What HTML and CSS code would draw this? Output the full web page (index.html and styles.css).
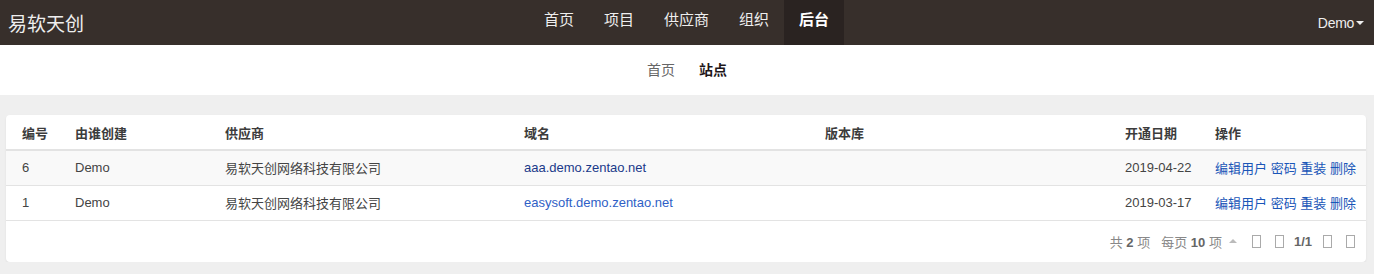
FILE: index.html
```html
<!DOCTYPE html>
<html lang="zh-CN">
<head>
    <meta charset="UTF-8">
    <title>站点</title>
    <link rel="stylesheet" href="styles.css">
</head>
<body>
    <header class="navbar">
        <div class="brand">易软天创</div>
        <ul class="nav">
            <li><a href="#">首页</a></li>
            <li><a href="#">项目</a></li>
            <li><a href="#">供应商</a></li>
            <li><a href="#">组织</a></li>
            <li class="active"><a href="#">后台</a></li>
        </ul>
        <div class="user">Demo<span class="caret"></span></div>
    </header>

    <nav class="subnav">
        <a href="#">首页</a>
        <a href="#" class="active">站点</a>
    </nav>

    <div class="panel">
        <table class="list">
            <colgroup>
                <col style="width: 61px">
                <col style="width: 150px">
                <col style="width: 299px">
                <col style="width: 301px">
                <col style="width: 300px">
                <col style="width: 90px">
                <col>
            </colgroup>
            <thead>
                <tr>
                    <th>编号</th>
                    <th>由谁创建</th>
                    <th>供应商</th>
                    <th>域名</th>
                    <th>版本库</th>
                    <th>开通日期</th>
                    <th>操作</th>
                </tr>
            </thead>
            <tbody>
                <tr class="odd">
                    <td>6</td>
                    <td>Demo</td>
                    <td>易软天创网络科技有限公司</td>
                    <td><a href="#" class="visited">aaa.demo.zentao.net</a></td>
                    <td></td>
                    <td>2019-04-22</td>
                    <td class="actions"><a href="#">编辑用户</a> <a href="#">密码</a> <a href="#">重装</a> <a href="#">删除</a></td>
                </tr>
                <tr>
                    <td>1</td>
                    <td>Demo</td>
                    <td>易软天创网络科技有限公司</td>
                    <td><a href="#">easysoft.demo.zentao.net</a></td>
                    <td></td>
                    <td>2019-03-17</td>
                    <td class="actions"><a href="#">编辑用户</a> <a href="#">密码</a> <a href="#">重装</a> <a href="#">删除</a></td>
                </tr>
            </tbody>
        </table>
        <div class="pager">
            <span class="total">共 <strong>2</strong> 项</span>
            <span class="per-page">每页 <strong>10</strong> 项</span>
            <span class="up"></span>
            <span class="box first"></span>
            <span class="box"></span>
            <strong class="page-num">1/1</strong>
            <span class="box"></span>
            <span class="box"></span>
        </div>
    </div>
</body>
</html>
```

FILE: styles.css
```css
body {
    margin: 0;
    background-color: #efefef;
    font-family: "Liberation Sans", "Noto Sans CJK SC", sans-serif;
    font-size: 13px;
    color: #333;
}

a {
    text-decoration: none;
}

.navbar {
    height: 45px;
    background-color: #372f2b;
    display: grid;
    grid-template-columns: 1fr auto 1fr;
    align-items: center;
    color: #fff;
}

.brand {
    padding-left: 8px;
    font-size: 19px;
    color: #eee;
}

.nav {
    list-style: none;
    margin: 0;
    padding: 0 1px 0 0;
    display: flex;
    height: 45px;
}

.nav a {
    display: block;
    height: 45px;
    line-height: 39px;
    padding: 0 15px;
    color: #eee;
    font-size: 15px;
}

.nav .active a {
    background-color: #2a2321;
    font-weight: bold;
    color: #fff;
}

.user {
    text-align: right;
    padding-right: 10px;
    font-size: 14px;
    letter-spacing: -0.3px;
    line-height: 38px;
    color: #eee;
}

.caret {
    display: inline-block;
    margin-left: 2px;
    vertical-align: 3px;
    border-left: 4px solid transparent;
    border-right: 4px solid transparent;
    border-top: 4px solid #eee;
}

.subnav {
    height: 50px;
    background-color: #fff;
    display: flex;
    justify-content: center;
    align-items: center;
    gap: 24px;
}

.subnav a {
    color: #666;
    font-size: 14px;
    line-height: 48px;
}

.subnav a.active {
    color: #1e1619;
    font-weight: bold;
}

.panel {
    margin: 20px 8px 0 6px;
    background-color: #fff;
    border-radius: 4px;
    box-shadow: 0 1px 2px rgba(0, 0, 0, 0.08);
}

.list {
    width: 100%;
    border-collapse: collapse;
    table-layout: fixed;
}

.list th, .list td {
    height: 33px;
    padding: 0 8px 1px;
    text-align: left;
    border-bottom: 1px solid #e3e3e3;
    white-space: nowrap;
}

.list th {
    font-weight: bold;
    color: #3c3c3c;
    border-bottom: 2px solid #e3e3e3;
    height: 32px;
    padding-top: 1px;
}

.list th:first-child, .list td:first-child {
    padding-left: 16px;
}

.list td {
    color: #444;
}

.list tr.odd td {
    background-color: #f9f9f9;
}

.list td a {
    color: #2f5fc6;
}

.list td a.visited {
    color: #1b3a8a;
}

.list td.actions a {
    color: #1a56b8;
}

.pager {
    height: 40px;
    padding: 0 11px 1px 0;
    display: flex;
    align-items: center;
    justify-content: flex-end;
    color: #888;
    font-size: 13px;
}

.pager strong {
    color: #666;
}

.per-page {
    margin-left: 11px;
}

.up {
    margin-left: 7px;
    width: 0;
    height: 0;
    border-left: 4px solid transparent;
    border-right: 4px solid transparent;
    border-bottom: 4px solid #bbb;
}

.box {
    width: 7px;
    height: 11px;
    border: 1px solid #aaa;
    margin-left: 14px;
}

.box.first {
    margin-left: 15px;
}

.page-num {
    margin: 0 11px 0 10px;
}

.page-num + .box {
    margin-left: 0;
}
```
